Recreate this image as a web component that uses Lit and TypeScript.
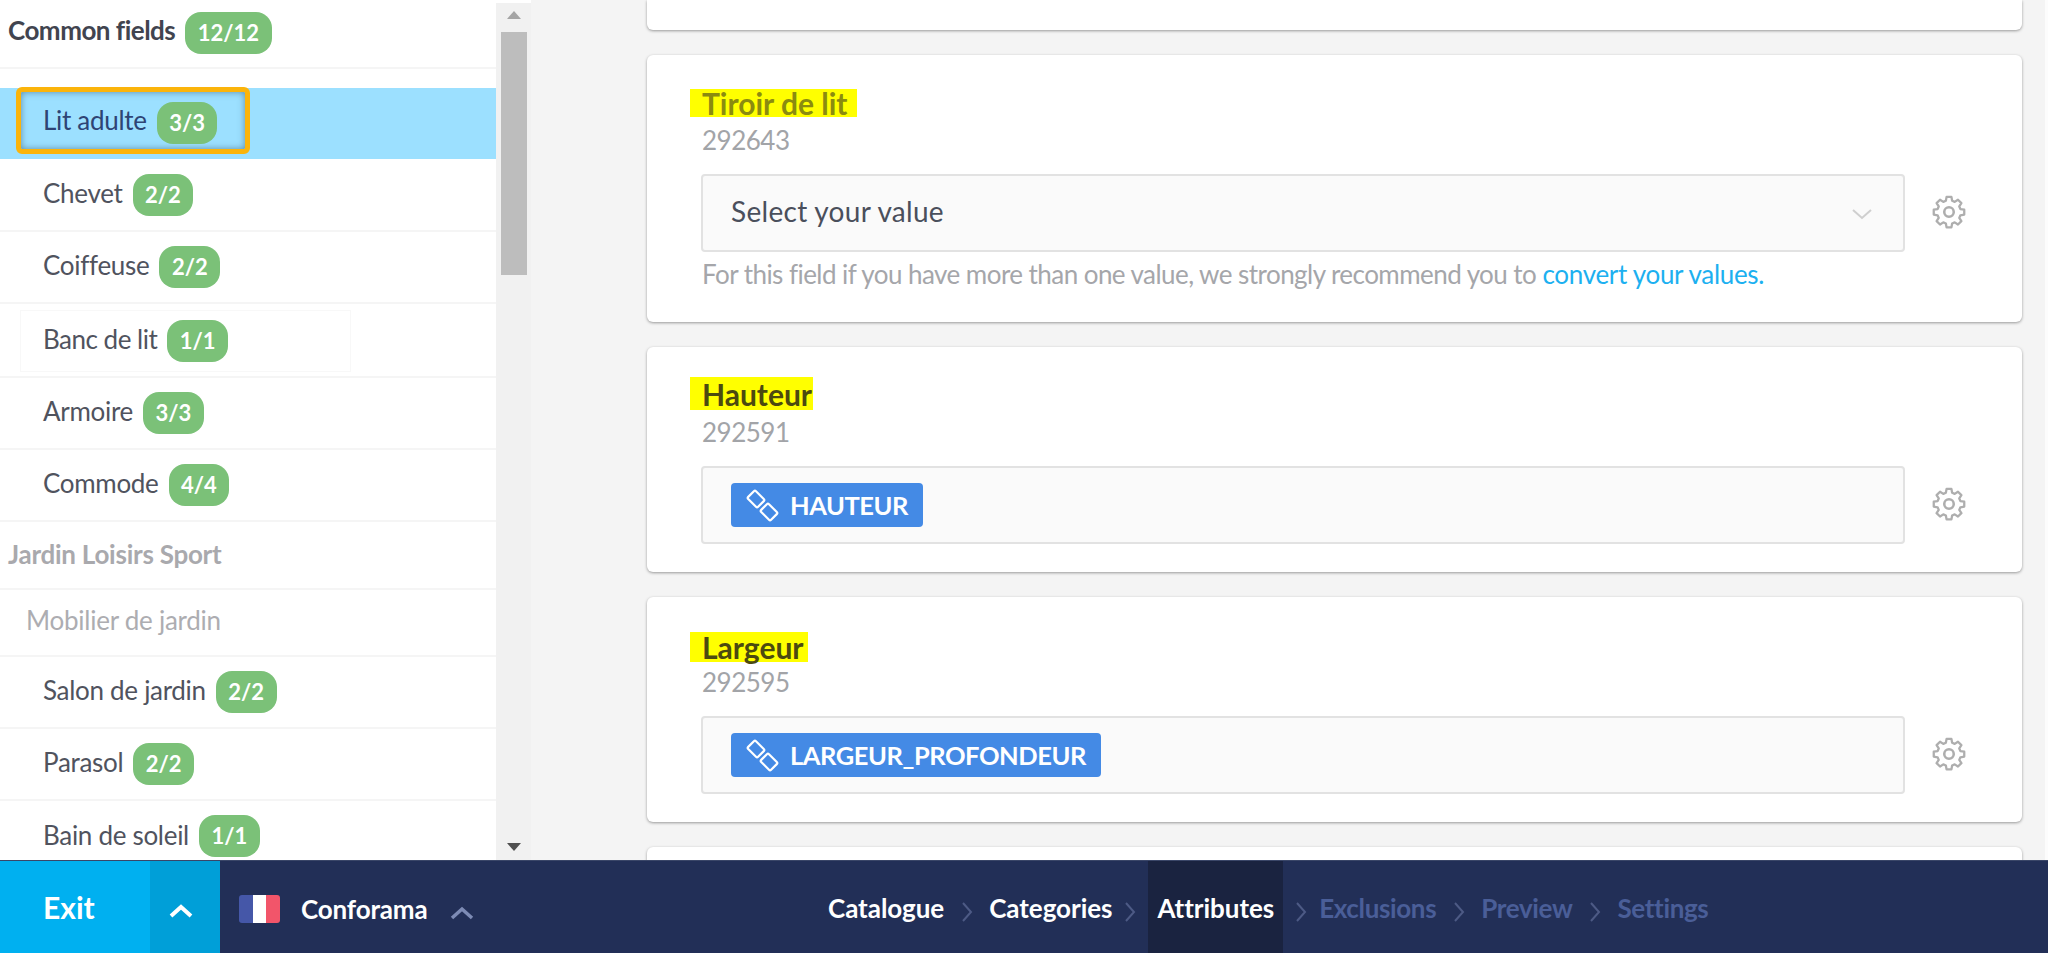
import { LitElement, html, css } from "lit";
import { customElement } from "lit/decorators.js";

type Row = { name: string; count?: string; cls: string };
const rows: Row[] = [
  { name: "Common fields", count: "12/12", cls: "head h-common" },
  { name: "Lit adulte", count: "3/3", cls: "sub selected" },
  { name: "Chevet", count: "2/2", cls: "sub" },
  { name: "Coiffeuse", count: "2/2", cls: "sub" },
  { name: "Banc de lit", count: "1/1", cls: "sub banc" },
  { name: "Armoire", count: "3/3", cls: "sub" },
  { name: "Commode", count: "4/4", cls: "sub" },
  { name: "Jardin Loisirs Sport", cls: "group" },
  { name: "Mobilier de jardin", cls: "family" },
  { name: "Salon de jardin", count: "2/2", cls: "sub" },
  { name: "Parasol", count: "2/2", cls: "sub" },
  { name: "Bain de soleil", count: "1/1", cls: "sub last" },
];

const linkIcon = html`<svg class="link" viewBox="0 0 33 33" fill="none" stroke="currentColor" stroke-width="2.2">
  <rect x="3" y="4.5" width="14" height="11" rx="1.5" transform="rotate(45 10 10)"></rect>
  <rect x="16" y="17.5" width="14" height="11" rx="1.5" transform="rotate(45 23 23)"></rect>
</svg>`;

const gearIcon = html`<svg class="gear" viewBox="0 0 24 24" fill="none" stroke="currentColor" stroke-width="1.6" stroke-linejoin="round">
  <path d="M10.3 2.6h3.4l.5 2.7 1.8.8 2.3-1.5 2.4 2.4-1.5 2.3.8 1.8 2.7.5v3.4l-2.7.5-.8 1.8 1.5 2.3-2.4 2.4-2.3-1.5-1.8.8-.5 2.7h-3.4l-.5-2.7-1.8-.8-2.3 1.5-2.4-2.4 1.5-2.3-.8-1.8-2.7-.5v-3.4l2.7-.5.8-1.8-1.5-2.3 2.4-2.4 2.3 1.5 1.8-.8z" transform="translate(12 12) scale(.9) translate(-12 -13.2)"></path>
  <circle cx="12" cy="12" r="3"></circle>
</svg>`;

const crumbs = [
  { t: "Catalogue", c: "done" },
  { t: "Categories", c: "done" },
  { t: "Attributes", c: "active" },
  { t: "Exclusions", c: "todo" },
  { t: "Preview", c: "todo" },
  { t: "Settings", c: "todo" },
];

@customElement("app-root")
export class AppRoot extends LitElement {
  static styles = css`
    :host {
      display: flex;
      flex-direction: column;
      width: 2048px;
      height: 953px;
      overflow: hidden;
      background: #fff;
      font-family: Lato, "Open Sans", sans-serif;
      color: #4a4f5c;
    }
    * { box-sizing: border-box; }
    .main { flex: none; height: 860px; display: flex; overflow: hidden; }

    .side { flex: none; width: 496px; height: 860px; overflow: hidden; padding-left: 3px; }
    .row {
      display: flex;
      align-items: center;
      margin-left: -3px;
      padding-left: 43px;
      border-bottom: 2px solid #f5f5f5;
      font-size: 26px;
      letter-spacing: -0.3px;
      height: 72px;
      color: #50535e;
    }
    .row .inner { display: flex; align-items: center; gap: 10px; }
    .row .txt { margin-bottom: 5px; }
    .row.head { padding-left: 8px; height: 69px; margin-bottom: 19px; font-weight: 700; color: #41444f; letter-spacing: -0.5px; }
    .row.head .inner { margin-top: -2px; }
    .row.selected {
      height: 71px;
      padding-left: 16px;
      background: #9ce0ff;
      border-bottom: 0;
      align-items: flex-start;
      color: #2e4474;
      margin-bottom: 1px;
    }
    .row.selected .inner {
      height: 67px;
      width: 234px;
      margin-top: -1px;
      padding-left: 22px;
      border: 5px solid #fbb40a;
      border-radius: 6px;
      box-shadow: inset 0 0 7px rgba(40, 70, 90, 0.55);
    }
    .row.selected .txt { margin-bottom: 1px; }
    .row.selected .badge { margin-top: 4px; }
    .row.banc { height: 74px; padding-left: 20px; letter-spacing: -0.5px; }
    .row.banc .inner {
      width: 331px;
      height: 62px;
      padding-left: 22px;
      margin-top: 1px;
      border: 1px solid #f8f8f8;
    }
    .row.banc .txt { margin-bottom: 3px; }
    .row.group { padding-left: 8px; height: 68px; font-weight: 700; color: #a9a9ad; letter-spacing: -0.25px; }
    .row.group .txt { margin-bottom: 3px; }
    .row.family { padding-left: 26px; height: 67px; color: #adadb1; letter-spacing: -0.25px; }
    .row.last { border-bottom: 0; height: 70px; }
    .row.last .inner { margin-top: -1px; }
    .row.last .txt { margin-bottom: 1px; }
    .badge {
      display: inline-flex;
      align-items: center;
      justify-content: center;
      height: 42px;
      padding: 0 12.5px;
      border-radius: 16px;
      background: #7bc178;
      color: #fff;
      font-size: 22px;
      font-weight: 700;
      letter-spacing: 0;
      line-height: 1;
    }

    .track {
      flex: none;
      width: 35px;
      height: 857px;
      margin-top: 3px;
      background: #f1f1f1;
      display: flex;
      flex-direction: column;
      align-items: center;
      justify-content: space-between;
      padding: 8px 0 9px;
    }
    .track .arrow { width: 0; height: 0; border-left: 7px solid transparent; border-right: 7px solid transparent; }
    .track .up { border-bottom: 8px solid #a5a5a5; }
    .track .down { border-top: 8px solid #505050; }
    .thumb { width: 26px; height: 243px; background: #bdbdbd; margin-top: 13px; margin-bottom: auto; }
    .track .down { margin-top: auto; }

    .content {
      flex: 1;
      min-width: 0;
      background: #f4f4f4;
      overflow: hidden;
      padding: 0 23px 0 116px;
      border-right: 3px solid #fcfcfc;
      display: flex;
      flex-direction: column;
      gap: 25px;
    }
    .card {
      flex: none;
      background: #fff;
      border-radius: 6px;
      box-shadow: 0 1px 3px rgba(0, 0, 0, 0.38);
      padding: 0 0 0 55px;
    }
    .card.stub { height: 30px; border-radius: 0 0 6px 6px; }
    .card.tiroir { height: 267px; }
    .card.field { height: 225px; }
    .card.next { height: 40px; }

    .head-block { height: 119px; }
    .name {
      display: inline-flex;
      align-items: center;
      margin-left: -12px;
      padding-left: 12px;
      background: #ffff00;
      font-size: 30px;
      font-weight: 700;
      color: #4c4a10;
    }
    .name.t { margin-top: 34px; height: 28px; color: #8b8b10; padding-right: 9px; }
    .name.h { margin-top: 30px; height: 33px; padding-right: 1px; }
    .name.l { margin-top: 35px; height: 30px; padding-right: 4px; }
    .id { font-size: 26px; line-height: 30px; color: #a2a4a8; letter-spacing: -0.5px; }
    .t + .id { margin-top: 7px; }
    .h + .id { margin-top: 7px; }
    .l + .id { margin-top: 5px; }

    .control { display: flex; align-items: center; }
    .select {
      flex: none;
      width: 1204px;
      height: 78px;
      margin-left: -1px;
      background: #fafafa;
      border: 2px solid #e2e2e2;
      border-radius: 4px;
      display: flex;
      align-items: center;
      justify-content: space-between;
      padding: 0 30px 0 28px;
      font-size: 28px;
      letter-spacing: 0.3px;
      color: #4a4f5c;
    }
    .select .val { margin-bottom: 5px; }
    .chev { width: 22px; height: 12px; color: #cfcfcf; margin-top: 1px; }
    .gear { width: 38px; height: 38px; color: #aeaeae; margin-left: 25px; margin-top: -3px; }
    .tag {
      display: inline-flex;
      align-items: center;
      height: 44px;
      background: #448ae5;
      border-radius: 4px;
      color: #fff;
      font-size: 25.5px;
      font-weight: 700;
      letter-spacing: -0.45px;
      padding: 0 15px;
    }
    .link { width: 33px; height: 33px; margin-right: 11px; flex: none; }
    .hint { margin-top: 9px; font-size: 26px; letter-spacing: -0.55px; line-height: 26px; color: #a5a6aa; white-space: nowrap; }
    .hint a { color: #1cb0f0; letter-spacing: -0.3px; }

    .footer {
      flex: 1;
      display: flex;
      align-items: stretch;
      background: #222f57;
      border-top: 1px solid #3a4668;
      color: #fff;
      font-size: 26px;
      font-weight: 700;
    }
    .exit { width: 150px; background: #00b0f0; display: flex; align-items: center; padding: 0 0 1px 43px; font-size: 30px; }
    .up-btn { width: 70px; background: #009fd8; display: flex; align-items: center; justify-content: center; padding: 7px 8px 0 0; }
    .caret { width: 24px; height: 14px; }
    .brand { width: 608px; display: flex; align-items: center; padding: 0 0 2px 19px; letter-spacing: -0.15px; }
    .brand .bname { margin-top: 6px; }
    .flag { width: 41px; height: 28px; border-radius: 3px; display: flex; overflow: hidden; margin: 6px 21px 0 0; }
    .flag i { flex: 1; }
    .flag .fb { background: #4557a8; }
    .flag .fw { background: #fff; }
    .flag .fr { background: #f2556a; }
    .brand .caret { margin-left: 22px; margin-top: 14px; color: #7d8bb5; }
    .crumbs { display: flex; align-items: stretch; letter-spacing: -0.05px; }
    .crumb { display: flex; align-items: center; padding-top: 2px; }
    .crumb.active { background: #1a2340; padding: 2px 9px 0; }
    .crumb.todo { color: #4a5e98; letter-spacing: -0.35px; }
    .sep { width: 45px; display: flex; align-items: center; justify-content: center; color: #4d5a85; }
    .sep.tight { width: 36px; }
    .sep svg { width: 12px; height: 24px; margin-top: 9px; }
  `;

  private renderRow(r: Row) {
    return html`<div class="row ${r.cls}">
      <div class="inner">
        <span class="txt">${r.name}</span>
        ${r.count ? html`<span class="badge">${r.count}</span>` : null}
      </div>
    </div>`;
  }

  private renderField(cls: string, name: string, id: string, tag: string) {
    return html`<section class="card field">
      <div class="head-block">
        <div class="name ${cls}">${name}</div>
        <div class="id">${id}</div>
      </div>
      <div class="control">
        <div class="select"><span class="tag">${linkIcon}${tag}</span></div>
        ${gearIcon}
      </div>
    </section>`;
  }

  render() {
    return html`
      <div class="main">
        <aside class="side">${rows.map((r) => this.renderRow(r))}</aside>
        <div class="track">
          <span class="arrow up"></span>
          <span class="thumb"></span>
          <span class="arrow down"></span>
        </div>
        <div class="content">
          <section class="card stub"></section>
          <section class="card tiroir">
            <div class="head-block">
              <div class="name t">Tiroir de lit</div>
              <div class="id">292643</div>
            </div>
            <div class="control">
              <div class="select">
                <span class="val">Select your value</span>
                <svg class="chev" viewBox="0 0 22 12" fill="none" stroke="currentColor" stroke-width="2"><path d="M2 2l9 8 9-8"></path></svg>
              </div>
              ${gearIcon}
            </div>
            <div class="hint">For this field if you have more than one value, we strongly recommend you to <a>convert your values.</a></div>
          </section>
          ${this.renderField("h", "Hauteur", "292591", "HAUTEUR")}
          ${this.renderField("l", "Largeur", "292595", "LARGEUR_PROFONDEUR")}
          <section class="card next"></section>
        </div>
      </div>
      <footer class="footer">
        <div class="exit">Exit</div>
        <div class="up-btn">
          <svg class="caret" viewBox="0 0 24 14" fill="none" stroke="currentColor" stroke-width="4"><path d="M2 12l10-9 10 9"></path></svg>
        </div>
        <div class="brand">
          <span class="flag"><i class="fb"></i><i class="fw"></i><i class="fr"></i></span>
          <span class="bname">Conforama</span>
          <svg class="caret" viewBox="0 0 24 14" fill="none" stroke="currentColor" stroke-width="3.5"><path d="M2 12l10-9 10 9"></path></svg>
        </div>
        <nav class="crumbs">
          ${crumbs.map(
            (c, i) => html`${i > 0
              ? html`<span class="sep ${i === 2 || i === 3 ? "tight" : ""}"><svg viewBox="0 0 12 24" fill="none" stroke="currentColor" stroke-width="2"><path d="M2 3l8 9-8 9"></path></svg></span>`
              : null}<span class="crumb ${c.c}">${c.t}</span>`
          )}
        </nav>
      </footer>
    `;
  }
}
